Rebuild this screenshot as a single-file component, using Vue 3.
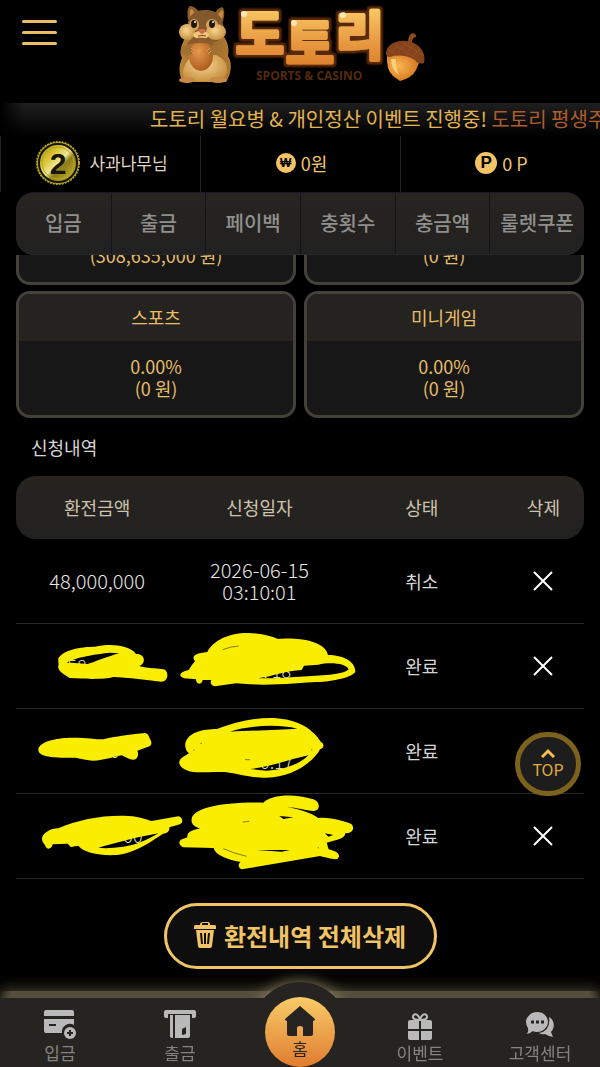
<script setup>
import { ref } from 'vue'

// Quick menu under the user info
const menus = ['입금', '출금', '페이백', '충횟수', '충금액', '룰렛쿠폰']

// Last lines of the cards that are scrolled under the menu
const scrolledCards = ['(308,635,000 원)', '(0 원)']

const cards = [
  { title: '스포츠', rate: '0.00%', amount: '(0 원)' },
  { title: '미니게임', rate: '0.00%', amount: '(0 원)' },
]

// Withdraw requests, hidden rows have no amount or date
const rows = ref([
  { id: 1, amount: '48,000,000', date: '2026-06-15', time: '03:10:01', status: '취소' },
  { id: 2, amount: '', date: '', time: '', status: '완료' },
  { id: 3, amount: '', date: '', time: '', status: '완료' },
  { id: 4, amount: '', date: '', time: '', status: '완료' },
])

function removeRow(id) {
  rows.value = rows.value.filter((row) => row.id !== id)
}

function removeAll() {
  rows.value = []
}

function goTop() {
  window.scrollTo({ top: 0, behavior: 'smooth' })
}
</script>

<template>
  <div class="page">
    <!-- Header with menu button and logo -->
    <header class="header">
      <button class="burger" type="button" aria-label="메뉴">
        <span></span>
        <span></span>
        <span></span>
      </button>
      <svg class="logo" viewBox="173 0 255 90" width="255" height="90">
        <defs>
          <linearGradient id="gold" gradientUnits="userSpaceOnUse" x1="0" y1="8" x2="0" y2="66">
            <stop offset="0" stop-color="#f9c964" />
            <stop offset="0.5" stop-color="#eba046" />
            <stop offset="1" stop-color="#dc7f2b" />
          </linearGradient>
          <!-- Brown outline round the brand name -->
          <filter id="outline" x="-10%" y="-20%" width="120%" height="140%">
            <feMorphology in="SourceAlpha" operator="dilate" radius="2" result="fat" />
            <feGaussianBlur in="fat" stdDeviation="1" result="soft" />
            <feFlood flood-color="#5b2c0c" />
            <feComposite in2="soft" operator="in" result="edge" />
            <feMerge>
              <feMergeNode in="edge" />
              <feMergeNode in="edge" />
              <feMergeNode in="SourceGraphic" />
            </feMerge>
          </filter>
          <linearGradient id="fur" x1="0" y1="0" x2="1" y2="0">
            <stop offset="0" stop-color="#b98538" />
            <stop offset="0.5" stop-color="#94652c" />
            <stop offset="1" stop-color="#b07a32" />
          </linearGradient>
          <radialGradient id="cream" cx="0.45" cy="0.4" r="0.65">
            <stop offset="0" stop-color="#f8d690" />
            <stop offset="1" stop-color="#c38b3c" />
          </radialGradient>
          <radialGradient id="nut" cx="0.4" cy="0.35" r="0.7">
            <stop offset="0" stop-color="#e59a4c" />
            <stop offset="1" stop-color="#a9581d" />
          </radialGradient>
          <radialGradient id="acorn" cx="0.35" cy="0.45" r="0.7">
            <stop offset="0" stop-color="#fbb54e" />
            <stop offset="1" stop-color="#cf6f1d" />
          </radialGradient>
        </defs>

        <!-- Squirrel -->
        <path d="M188 20Q186 6 191 6Q198 8 200 15ZM214 15Q217 8 222 7Q226 9 223 22Z" fill="#8a5c28" />
        <path d="M190 16Q189 9 192 9L196 15ZM217 15L222 10Q224 13 222 19Z" fill="#c98a49" />
        <path d="M185 38C181 46 179 52 182 58C178 66 179 78 184 82H226C231 74 233 64 228 56C230 46 226 38 222 35Z" fill="url(#fur)" />
        <path d="M187 29C188 13 196 10 205 10C216 10 223 15 224 31C222 42 213 43 205 43C195 43 187 40 187 29Z" fill="#83592b" />
        <path d="M184 67C188 57 196 53 205 53C218 53 227 60 227 69C227 77 222 82 214 82H192C185 81 181 76 184 67Z" fill="url(#cream)" />
        <ellipse cx="194" cy="25" rx="5" ry="6" fill="#d3a45a" />
        <ellipse cx="212" cy="25" rx="6" ry="6" fill="#d3a45a" />
        <ellipse cx="187" cy="32" rx="8" ry="8" fill="url(#cream)" />
        <ellipse cx="216" cy="32" rx="10" ry="8" fill="url(#cream)" />
        <ellipse cx="201" cy="35" rx="8" ry="4" fill="#f0c77c" />
        <ellipse cx="194" cy="24" rx="3" ry="4" fill="#21160c" />
        <ellipse cx="212" cy="24" rx="3" ry="4" fill="#21160c" />
        <circle cx="195" cy="22" r="1" fill="#fff" />
        <circle cx="213" cy="22" r="1" fill="#fff" />
        <path d="M198 30Q202 28 206 30Q204 34 202 34Q200 34 198 30Z" fill="#cf704b" />
        <path d="M198 36Q202 35 206 36" fill="none" stroke="#754419" stroke-width="1" />
        <ellipse cx="201" cy="56" rx="12" ry="15" fill="url(#nut)" />
        <path d="M187 45C189 36 211 35 214 45Q201 41 187 45Z" fill="#8d5b2a" />
        <path d="M181 48Q184 43 191 46L193 53Q190 57 182 55ZM209 48Q218 43 223 48Q221 56 211 55Q206 52 209 48Z" fill="#a3712f" />
        <path d="M191 48L195 51M191 51L194 54M210 48L207 51M211 51L208 54" stroke="#d99f51" stroke-width="1" />
        <ellipse cx="187" cy="80" rx="8" ry="3" fill="#c98a49" />
        <ellipse cx="218" cy="80" rx="9" ry="3" fill="#c98a49" />

        <!-- Brand name -->
        <g class="brand" filter="url(#outline)">
          <text x="236" y="54">도</text>
          <text x="286" y="63">토</text>
          <text x="336" y="55">리</text>
        </g>
        <circle cx="244" cy="14" r="3" fill="#fff2c9" opacity="0.8" />
        <circle cx="294" cy="23" r="3" fill="#fff2c9" opacity="0.8" />
        <circle cx="343" cy="15" r="3" fill="#fff2c9" opacity="0.8" />
        <text class="slogan" x="256" y="80">SPORTS &amp; CASINO</text>

        <!-- Acorn -->
        <path d="M408 43Q408 34 413 33Q417 35 416 37Q411 38 412 44Z" fill="#8c4b1d" />
        <path d="M387 54Q386 70 393 76L400 81Q412 78 416 70Q420 62 420 56Z" fill="url(#acorn)" />
        <path d="M391 59Q391 69 399 75Q395 66 396 59Z" fill="#ffd07a" />
        <path d="M386 53C387 44 397 40 406 41C418 42 427 52 424 63Q418 65 415 60Q402 53 390 57Q386 57 386 53Z" fill="#85431c" />
        <path d="M391 52L398 45M397 54L406 44M405 55L413 45M411 58L420 49M396 46L419 60M403 43L423 55M389 50L396 54" stroke="#964f22" stroke-width="1" />
      </svg>
    </header>

    <!-- Event notice line -->
    <div class="notice">
      <p>도토리 월요병 &amp; 개인정산 이벤트 진행중! <span>도토리 평생주소</span></p>
    </div>

    <!-- User info -->
    <section class="user">
      <div class="user-cell name">
        <svg viewBox="0 0 46 46" width="46" height="46">
          <defs>
            <linearGradient id="coin" x1="0" y1="0" x2="1" y2="1">
              <stop offset="0" stop-color="#a08c1a" />
              <stop offset="0.3" stop-color="#d8c22c" />
              <stop offset="0.5" stop-color="#eee696" />
              <stop offset="0.6" stop-color="#8d7b18" />
              <stop offset="1" stop-color="#d4c030" />
            </linearGradient>
          </defs>
          <circle cx="23" cy="23" r="21" fill="#a8971f" stroke="#b8a526" stroke-width="2" stroke-dasharray="2 1" />
          <circle cx="23" cy="23" r="19" fill="url(#coin)" stroke="#16150a" stroke-width="2" />
          <circle cx="23" cy="23" r="16" fill="none" stroke="#b5a225" stroke-width="1" />
          <text class="coin-no" x="23" y="34" text-anchor="middle">2</text>
        </svg>
        <span>사과나무님</span>
      </div>
      <div class="user-cell">
        <i class="mark won">₩</i>
        <span>0원</span>
      </div>
      <div class="user-cell">
        <i class="mark point">P</i>
        <span>0 P</span>
      </div>
    </section>

    <!-- Quick menu -->
    <nav class="menu">
      <a v-for="menu in menus" :key="menu" href="#">{{ menu }}</a>
    </nav>

    <main class="content">
      <div class="cards scrolled">
        <div v-for="amount in scrolledCards" :key="amount" class="card">
          <p>{{ amount }}</p>
        </div>
      </div>
      <div class="cards">
        <div v-for="card in cards" :key="card.title" class="card">
          <h3>{{ card.title }}</h3>
          <p>{{ card.rate }}<br />{{ card.amount }}</p>
        </div>
      </div>

      <h2>신청내역</h2>

      <div class="history">
        <table>
          <thead>
            <tr>
              <th>환전금액</th>
              <th>신청일자</th>
              <th>상태</th>
              <th class="narrow">삭제</th>
            </tr>
          </thead>
          <tbody>
            <tr v-for="row in rows" :key="row.id">
              <td class="number">{{ row.amount }}</td>
              <td class="number">{{ row.date }}<br />{{ row.time }}</td>
              <td>{{ row.status }}</td>
              <td>
                <button class="delete" type="button" aria-label="삭제" @click="removeRow(row.id)">
                  <svg viewBox="0 0 20 20" width="20" height="20">
                    <path d="M1 1L19 19M19 1L1 19" stroke="#fff" stroke-width="2" />
                  </svg>
                </button>
              </td>
            </tr>
          </tbody>
        </table>

        <!-- Marker strokes over the private rows -->
        <svg v-if="rows.length === 4" class="marker" viewBox="0 0 1110 795" width="370" height="265">
          <g class="marker-text">
            <text x="202" y="158">58</text>
            <text x="790" y="174">: 18</text>
            <text x="330" y="413">0</text>
            <text x="780" y="446">0:17</text>
            <text x="370" y="670">00</text>
          </g>
          <g fill="#f9ed00" fill-rule="evenodd">
            <path d="M175 115C190 90 240 80 285 80C330 70 390 75 408 102C435 100 440 130 418 138C425 143 470 145 492 148C508 155 505 185 485 185C450 182 380 172 340 171C310 180 240 176 208 174C200 165 178 160 174 140C178 135 174 128 175 115ZM200 128C225 112 290 102 330 98L358 100C320 110 280 128 262 132L215 128Z" />
            <path d="M541 165C541 155 560 152 566 150C572 140 580 130 585 124C575 110 580 100 622 96C640 60 690 38 745 39C790 40 815 50 835 57C880 52 975 58 984 105C1030 105 1067 125 1066 155C1060 170 1000 185 950 186C900 188 800 200 708 190L645 199C632 198 630 185 634 180L608 180C606 195 588 195 588 178C565 175 543 178 541 165ZM775 175C820 168 860 152 905 150L912 137L955 134C990 125 1040 130 1046 148C1030 165 960 167 900 170C850 173 810 175 775 175Z" />
            <path d="M115 388C118 360 190 352 220 353C260 353 290 358 310 358C340 350 400 342 435 339C448 342 446 352 450 356C458 370 455 378 440 382L412 392C418 405 412 420 398 419C385 418 375 410 365 406C350 408 310 422 280 422C255 420 240 415 225 413C180 414 112 415 115 388Z" />
            <path d="M556 370C565 335 610 328 650 327C700 310 750 294 810 294C880 294 935 320 962 365C975 372 972 385 960 388C945 420 880 473 800 473C740 472 720 462 675 456C640 455 600 458 580 456C540 450 525 425 550 410L567 400C556 390 555 380 556 370ZM690 335C740 318 830 310 892 326C840 330 750 332 690 335ZM750 447C810 440 870 418 925 406C905 430 850 450 800 452Z" />
            <path d="M126 655C128 640 150 625 175 625C230 600 300 586 370 587C410 587 440 598 455 603L535 589C550 592 552 612 535 614L508 622C510 635 500 640 488 642C460 660 420 690 370 702C320 712 250 700 235 677L212 681L203 671L158 673C155 690 138 690 135 675C128 668 126 662 126 655ZM295 683C340 672 390 655 475 640C440 660 410 675 370 680C340 684 315 686 295 683Z" />
            <path d="M575 597C580 565 660 546 790 548C810 525 880 518 940 538C962 545 962 572 940 573C920 573 890 562 862 562C900 568 935 580 955 594C990 590 1040 605 1055 613C1065 625 1058 640 1035 640C1038 655 1010 660 980 668L986 688C1010 695 1018 700 1017 710C1012 722 1000 718 960 708L725 748C712 742 715 730 722 726C680 718 645 705 641 684L550 682C533 675 536 660 548 657L562 652C560 635 580 628 600 626C585 620 572 612 575 597ZM838 588L880 592L850 597ZM975 640L1000 645L985 650ZM770 690L870 690L845 695Z" />
          </g>
          <path d="M668 89Q690 80 716 78M728 606L748 604M735 419L750 419M670 686Q700 700 740 709M580 390L584 390M601 371L606 370M933 389L937 390M953 683L957 684" fill="none" stroke="#474400" stroke-width="2" />
        </svg>
      </div>

      <button class="delete-all" type="button" @click="removeAll">
        <svg viewBox="0 0 22 26" width="22" height="26">
          <path d="M6 3Q6 0 9 0H14Q16 0 16 3M1 3H21Q22 3 22 5V7H0V5Q0 3 1 3ZM2 8H20L18 24Q18 26 16 26H6Q4 26 4 24Z" fill="#f1c467" />
          <path d="M8 2H14M7 11L8 22M11 11V22M15 11L14 22" stroke="#0e0e0e" stroke-width="2" />
        </svg>
        <span>환전내역 전체삭제</span>
      </button>
    </main>

    <button class="top" type="button" @click="goTop">
      <svg viewBox="0 0 14 10" width="14" height="10">
        <path d="M1 9L7 3L13 9" fill="none" stroke="#f4bf4f" stroke-width="3" />
      </svg>
      <span>TOP</span>
    </button>

    <!-- Bottom tab bar -->
    <nav class="tabs">
      <div class="bump"></div>
      <div class="tab-list">
        <a href="#">
          <svg viewBox="0 0 32 30" width="32" height="30">
            <path d="M0 2Q0 0 2 0H28Q30 0 30 2V6H0ZM0 9H30V15A8 8 0 0 0 18 23H2Q0 23 0 21Z" fill="#b9b9b9" />
            <path d="M5 15H12" stroke="#262420" stroke-width="2" />
            <circle cx="26" cy="23" r="6" fill="#b9b9b9" />
            <path d="M23 23H29M26 20V26" stroke="#262420" stroke-width="2" />
          </svg>
          <span>입금</span>
        </a>
        <a href="#">
          <svg viewBox="0 0 32 30" width="32" height="30">
            <path d="M2 0H30Q32 0 32 2V6Q32 8 30 8H28V4H4V8H2Q0 8 0 6V2Q0 0 2 0Z" fill="#b9b9b9" />
            <path d="M6 5H9V28H8Q6 28 6 26ZM11 5H26V26Q26 28 24 28H11Z" fill="#b9b9b9" />
            <path d="M18 19L22 17V24L18 25Z" fill="#262420" />
          </svg>
          <span>출금</span>
        </a>
        <a class="home" href="#">
          <svg viewBox="0 0 30 30" width="30" height="30">
            <path d="M15 0L30 13Q30 15 28 15V28Q28 30 26 30H18V22Q18 20 15 20Q12 20 12 22V30H4Q2 30 2 28V15Q0 15 0 13Z" fill="#262420" />
          </svg>
          <span>홈</span>
        </a>
        <a href="#">
          <svg viewBox="0 0 24 30" width="24" height="30">
            <path d="M12 10C8 10 4 9 5 6C7 2 11 5 12 10C13 5 17 2 19 6C20 9 16 10 12 10Z" fill="none" stroke="#b9b9b9" stroke-width="2" />
            <path d="M2 10H11V19H0V12Q0 10 2 10ZM13 10H22Q24 10 24 12V19H13ZM0 21H11V30H2Q0 30 0 28ZM13 21H24V28Q24 30 22 30H13Z" fill="#b9b9b9" />
          </svg>
          <span>이벤트</span>
        </a>
        <a href="#">
          <svg viewBox="0 0 28 30" width="28" height="30">
            <path d="M23 7C29 10 29 18 25 22L27 27Q22 26 19 24Q16 25 13 23Q25 21 23 7Z" fill="#b9b9b9" />
            <path d="M11 2C18 2 22 7 22 12C22 17 17 22 11 22Q8 22 7 21Q5 23 1 24Q3 21 2 18Q0 15 0 12C0 7 5 2 11 2Z" fill="#b9b9b9" />
            <path d="M5 12H8M10 12H13M15 12H18" stroke="#262420" stroke-width="3" />
          </svg>
          <span>고객센터</span>
        </a>
      </div>
    </nav>
  </div>
</template>

<style>
body {
  background: #000;
}
</style>

<style scoped>
.page {
  min-height: 100vh;
  padding-bottom: 98px;
  box-sizing: border-box;
  overflow: hidden;
  background: #000;
  color: #d6d6d6;
  font-family: "Noto Sans CJK KR", "Noto Sans", sans-serif;
  font-size: 18px;
  line-height: 22px;
}

a {
  color: inherit;
  text-decoration: none;
}

button {
  padding: 0;
  border: none;
  background: none;
  font-family: inherit;
  cursor: pointer;
}

svg {
  display: block;
}

/* Header */
.header {
  display: grid;
  grid-template-columns: 1fr auto 1fr;
  align-items: start;
  height: 103px;
}

.burger {
  display: flex;
  flex-direction: column;
  gap: 8px;
  width: 35px;
  margin: 20px 0 0 22px;
}

.burger span {
  height: 3px;
  border-radius: 2px;
  background: #edbd66;
}

.logo {
  overflow: visible;
}

.brand {
  fill: url(#gold);
  stroke: url(#gold);
  stroke-width: 4px;
  stroke-linejoin: round;
  font-size: 52px;
  font-weight: 700;
}

.slogan {
  fill: #532a0c;
  font-family: "Open Sans", sans-serif;
  font-size: 12px;
  font-weight: 700;
}

/* Notice line */
.notice {
  height: 33px;
  padding-left: 25%;
  overflow: hidden;
  background: linear-gradient(90deg, #000, transparent 24px), linear-gradient(#1f1f1f, #000);
  color: #e3b44f;
  font-size: 20px;
  line-height: 31px;
  white-space: nowrap;
}

.notice p {
  margin: 0;
}

.notice span {
  color: #ad5e2b;
}

/* User info */
.user {
  display: grid;
  grid-template-columns: repeat(3, 1fr);
  height: 56px;
}

.user-cell {
  display: flex;
  align-items: center;
  justify-content: center;
  gap: 5px;
  padding: 0 0 2px 2px;
  border-left: 1px solid #242424;
  color: #efc470;
}

.user-cell.name {
  gap: 8px;
  color: #e0d5c4;
  font-size: 17px;
}

.coin-no {
  fill: #17160c;
  font-family: "Liberation Sans", sans-serif;
  font-size: 30px;
  font-weight: 700;
}

.mark {
  display: flex;
  align-items: center;
  justify-content: center;
  border-radius: 50%;
  background: #f3c365;
  color: #000;
  font-family: "Liberation Sans", sans-serif;
  font-style: normal;
  font-weight: 700;
}

.won {
  width: 20px;
  height: 20px;
  font-size: 12px;
}

.point {
  width: 22px;
  height: 22px;
  font-size: 17px;
}

/* Quick menu */
.menu {
  display: grid;
  grid-template-columns: repeat(6, 1fr);
  height: 63px;
  margin: 0 16px;
  box-sizing: border-box;
  border-top: 1px solid #1b1b24;
  border-bottom: 1px solid #2a2a2c;
  border-radius: 18px;
  background: linear-gradient(#272420, #212121);
  color: #918f8c;
  font-size: 20px;
  font-weight: 500;
  line-height: 60px;
  text-align: center;
  white-space: nowrap;
}

.menu a + a {
  border-left: 1px solid #14141e;
}

/* Cards */
.content {
  padding: 0 16px;
}

.cards {
  display: grid;
  grid-template-columns: 1fr 1fr;
  gap: 8px;
}

.card {
  border: 3px solid #43413a;
  border-radius: 14px;
  overflow: hidden;
  background: #171717;
  color: #e8bd69;
  text-align: center;
}

.card h3 {
  margin: 0;
  background: #25231f;
  font-size: 18px;
  font-weight: 400;
  line-height: 47px;
}

.card p {
  margin: 0;
  padding: 14px 0 16px;
}

.cards.scrolled {
  grid-auto-rows: max-content;
  align-content: end;
  height: 30px;
  margin-bottom: 6px;
  overflow: hidden;
}

.scrolled .card {
  border-top: none;
  border-radius: 0 0 14px 14px;
}

.scrolled .card p {
  padding-top: 0;
}

h2 {
  margin: 0;
  padding: 0 15px;
  font-size: 18px;
  font-weight: 400;
  line-height: 58px;
}

/* Request table */
.history {
  position: relative;
}

table {
  width: 100%;
  border-collapse: separate;
  border-spacing: 0;
  table-layout: fixed;
  text-align: center;
}

th {
  height: 61px;
  padding: 0 0 2px;
  background: linear-gradient(#27241f, #212121);
  color: #cfc2ae;
  font-weight: 400;
}

th:first-child {
  border-radius: 20px 0 0 20px;
}

th:last-child {
  border-radius: 0 20px 20px 0;
}

.narrow {
  width: calc(100% / 7);
}

td {
  height: 84px;
  padding: 0;
  border-bottom: 1px solid #292929;
}

td.number {
  color: #e4e4e4;
  font-size: 20px;
  font-weight: 300;
}

.delete {
  display: block;
  margin: 0 auto;
}

.marker {
  position: absolute;
  top: 144px;
  left: -16px;
  pointer-events: none;
}

.marker-text {
  fill: #d6d6d6;
  font-size: 54px;
  font-weight: 300;
}

.delete-all {
  display: flex;
  align-items: center;
  justify-content: center;
  gap: 8px;
  width: 273px;
  height: 66px;
  margin: 24px auto 0;
  padding-bottom: 2px;
  border: 3px solid #f1c467;
  border-radius: 33px;
  background: #0e0e0e;
  color: #f1c467;
  font-size: 24px;
  font-weight: 700;
}

/* Top button */
.top {
  position: fixed;
  right: 19px;
  bottom: 271px;
  display: flex;
  flex-direction: column;
  align-items: center;
  justify-content: center;
  width: 66px;
  height: 64px;
  border: 5px solid #7d621e;
  border-radius: 33px;
  background: #1d1d1d;
  color: #e0ac42;
  font-size: 16px;
  line-height: 22px;
}

/* Bottom tab bar */
.tabs {
  position: fixed;
  right: 0;
  bottom: 0;
  left: 0;
  box-shadow: 0 -6px 16px #635b44;
}

.tabs::before {
  content: "";
  position: absolute;
  top: -7px;
  right: 0;
  left: 0;
  height: 7px;
  background: linear-gradient(90deg, transparent, #554e3d 12px, #554e3d calc(100% - 12px), transparent);
}

.bump {
  position: absolute;
  top: -16px;
  left: calc(50% - 48px);
  width: 96px;
  height: 96px;
  border-radius: 50%;
  background: #262420;
  box-shadow: 0 0 16px #8b805f;
}

.tab-list {
  position: relative;
  display: grid;
  grid-template-columns: repeat(5, 1fr);
  height: 69px;
  background: #262420;
  color: #85837f;
  font-size: 17px;
}

.tab-list a {
  display: flex;
  flex-direction: column;
  align-items: center;
  gap: 2px;
  padding-top: 12px;
}

.tab-list .home {
  width: 70px;
  height: 70px;
  margin: -1px auto 0;
  padding-top: 9px;
  box-sizing: border-box;
  border-radius: 50%;
  background: linear-gradient(#f8cb68, #e07c30);
  color: #262420;
}
</style>
